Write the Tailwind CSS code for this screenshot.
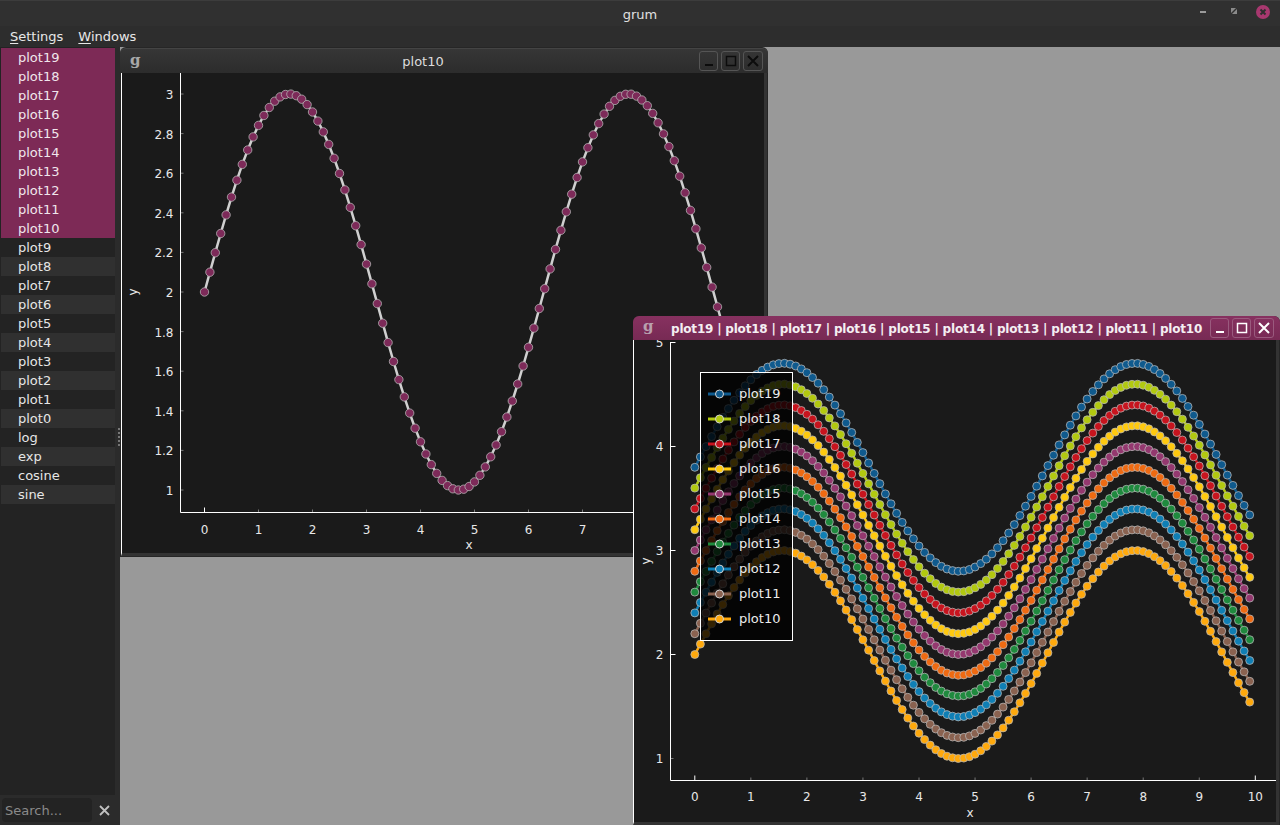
<!DOCTYPE html>
<html lang="en">
<head>
  <meta charset="UTF-8">
  <title>grum</title>
  <script src="https://cdn.jsdelivr.net/npm/@tailwindcss/browser@4"></script>
</head>
<body class="bg-[#2d2d2d] overflow-hidden">
<div class="w-[1280px] h-[825px] flex flex-col overflow-hidden text-[13px] text-[#e6e6e6] font-['DejaVu_Sans',sans-serif]">

  <!-- title bar -->
  <header class="h-[26px] shrink-0 flex items-center relative bg-[#303030] border-t border-[#3c3c3c]">
    <div class="flex-1 text-center text-[13px] text-[#e0e0e0] pt-[2px]">grum</div>
    <div class="absolute left-[1198px] top-[4px] flex items-center">
      <svg width="72" height="16" viewBox="0 0 72 16">
        <rect x="2" y="6" width="6" height="2" fill="#9a9a9a"/>
        <path d="M33 3h6v6h-6z" fill="#8a8a8a"/><path d="M33 9l6-6" stroke="#303030" stroke-width="1.5"/>
        <circle cx="65" cy="7" r="7" fill="#a8386f"/>
        <path d="M62.5 4.5l5 5M67.5 4.5l-5 5" stroke="#2f2f2f" stroke-width="2"/>
      </svg>
    </div>
  </header>

  <!-- menu -->
  <nav class="h-[21px] shrink-0 flex items-center gap-[15px] pl-[10px] bg-[#2d2d2d] text-[#e8e8e8]">
    <span><span class="underline underline-offset-2">S</span>ettings</span>
    <span><span class="underline underline-offset-2">W</span>indows</span>
  </nav>

  <div class="flex-1 flex min-h-0">
    <!-- plot list -->
    <aside class="w-[120px] shrink-0 flex flex-col bg-[#2b2b2b] relative">
      <ul id="list" class="h-[748px] w-[115px] bg-[#232323] pl-[1px] pt-[1px]"></ul>
      <div class="flex items-center pl-[2px] pt-[3px]">
        <input placeholder="Search..." class="w-[90px] h-[24px] px-[3px] rounded bg-[#232323] text-[13px] placeholder:text-[#8a8a8a] outline-none">
        <svg class="ml-[7px]" width="11" height="11" viewBox="0 0 11 11"><path d="M1 1l9 9M10 1l-9 9" stroke="#c0c0c0" stroke-width="1.8"/></svg>
      </div>
      <div class="absolute left-[118px] top-[381px] h-[18px] w-[2px] border-l-2 border-dotted border-[#777]"></div>
    </aside>

    <!-- mdi area -->
    <main class="flex-1 relative bg-[#999999] overflow-hidden">

      <section class="absolute left-0 top-0 w-[648px] h-[510px] flex flex-col rounded-t-md bg-[#262626]">
        <div class="h-[25px] mt-[1px] shrink-0 flex items-center relative rounded-t-md bg-gradient-to-b from-[#363636] to-[#2c2c2c] border-t border-[#444]">
          <span class="absolute left-[10px] top-[0px] text-[15px] font-bold text-[#a8a8a8] font-['DejaVu_Serif',serif]">g</span>
          <span class="flex-1 text-center text-[13px] text-[#dcdcdc] pr-[42px] pt-[1px]">plot10</span>
          <div class="absolute right-[5px] top-[2px] flex gap-[3px]">
            <span class="w-[19px] h-[20px] rounded-[3px] border border-[#555] flex items-center justify-center">
              <svg width="12" height="12" viewBox="0 0 12 12"><path d="M2 10h8" stroke="#0c0c0c" stroke-width="2"/></svg>
            </span>
            <span class="w-[19px] h-[20px] rounded-[3px] border border-[#555] flex items-center justify-center">
              <svg width="12" height="12" viewBox="0 0 12 12"><rect x="1.5" y="1.5" width="9" height="9" fill="none" stroke="#0c0c0c" stroke-width="1.5"/></svg>
            </span>
            <span class="w-[20px] h-[20px] rounded-[3px] border border-[#555] flex items-center justify-center">
              <svg width="12" height="12" viewBox="0 0 12 12"><path d="M1 1l10 10M11 1l-10 10" stroke="#0c0c0c" stroke-width="2"/></svg>
            </span>
          </div>
        </div>
        <div class="flex-1 min-h-0 ml-[1px] mr-[1px] mb-[1px] border-l border-white border-r-[3px] border-r-[#333] border-b-[3px] border-b-[#333] bg-[#1a1a1a]">
          <svg id="plotA" class="block" width="642" height="480" viewBox="122 73 642 480"></svg>
        </div>
      </section>

      <section class="absolute left-[513px] top-[269px] w-[647px] h-[509px] flex flex-col rounded-t-md bg-[#262626]">
        <div class="h-[24px] shrink-0 flex items-center relative rounded-t-md bg-gradient-to-b from-[#873160] to-[#772a54]">
          <span class="absolute left-[10px] top-[-1px] text-[15px] font-bold text-[#b9a0ae] font-['DejaVu_Serif',serif]">g</span>
          <span class="absolute left-[38px] top-[4px] text-[12px] tracking-[-0.2px] font-bold text-[#f4eef2] whitespace-nowrap">plot19 | plot18 | plot17 | plot16 | plot15 | plot14 | plot13 | plot12 | plot11 | plot10</span>
          <div class="absolute right-[6px] top-[2px] flex gap-[3px]">
            <span class="w-[19px] h-[20px] rounded-[3px] border border-[#9a5a7e] flex items-center justify-center">
              <svg width="12" height="12" viewBox="0 0 12 12"><path d="M2 10h8" stroke="#fff" stroke-width="2"/></svg>
            </span>
            <span class="w-[19px] h-[20px] rounded-[3px] border border-[#9a5a7e] flex items-center justify-center">
              <svg width="12" height="12" viewBox="0 0 12 12"><rect x="1.5" y="1.5" width="9" height="9" fill="none" stroke="#fff" stroke-width="1.5"/></svg>
            </span>
            <span class="w-[20px] h-[20px] rounded-[3px] border border-[#9a5a7e] flex items-center justify-center">
              <svg width="12" height="12" viewBox="0 0 12 12"><path d="M1 1l10 10M11 1l-10 10" stroke="#fff" stroke-width="2"/></svg>
            </span>
          </div>
        </div>
        <div class="flex-1 min-h-0 relative ml-[0px] mr-[1px] border-l border-white border-r-[3px] border-r-[#333] border-b-[3px] border-b-[#333] bg-[#1a1a1a]">
          <svg id="plotB" class="block" width="642" height="482" viewBox="634 340 642 482"></svg>
          <div id="legend" class="absolute left-[66px] top-[32px] w-[93px] h-[269px] border border-white bg-black/80 flex flex-col pt-[8px] text-[13px] text-[#ececec]"></div>
        </div>
      </section>
    </main>
  </div>
</div>

<script>
// list on the left
const names = [];
for (let i = 19; i >= 0; i--) names.push('plot' + i);
names.push('log', 'exp', 'cosine', 'sine');
const list = document.getElementById('list');
names.forEach((n, i) => {
  const li = document.createElement('li');
  li.innerText = n;
  const cls = i < 10 ? 'bg-[#7d2a56] text-[#f0e6ec]' : (i % 2 ? 'bg-[#303030]' : 'bg-[#232323]');
  li.className = 'h-[19px] leading-[19px] pl-[17px] ' + cls;
  list.appendChild(li);
});

// plots
const series = [
  ['plot19', '#0f5a8e'], ['plot18', '#b2c90f'], ['plot17', '#c8141e'], ['plot16', '#ffc90e'],
  ['plot15', '#94386f'], ['plot14', '#ef6a12'], ['plot13', '#1f8a3e'], ['plot12', '#0f7fb5'],
  ['plot11', '#8a6250'], ['plot10', '#ffa90c']
];

function axes(o) {
  let s = '';
  o.xt.forEach(v => {
    const x = o.x0 + v * o.sx, big = v === 0 || v === 10;
    s += `<line x1="${x}" x2="${x}" y1="${o.bottom}" y2="${o.bottom - (big ? 5 : 3)}" stroke="${big ? '#fff' : '#777'}"/>`;
    s += `<text x="${x}" y="${o.bottom + o.xDy}" text-anchor="middle" font-size="12" fill="#e8e8e8">${v}</text>`;
  });
  o.yt.forEach(v => {
    const y = o.y1 - (v - 1) * o.sy, big = o.bigY.includes(v);
    s += `<line x1="${o.left}" x2="${o.left + (big ? 5 : 3)}" y1="${y}" y2="${y}" stroke="${big ? '#fff' : '#777'}"/>`;
    s += `<text x="${o.left - 7}" y="${y + o.yDy}" text-anchor="end" font-size="12" fill="#e8e8e8">${v}</text>`;
  });
  s += `<path d="M${o.left} ${o.top}V${o.bottom}H${o.right}" fill="none" stroke="#fff" stroke-width="1"/>`;
  s += `<text x="${o.xl}" y="${o.xlY}" text-anchor="middle" font-size="12" fill="#e8e8e8">x</text>`;
  s += `<text transform="translate(${o.yl} ${o.ylY}) rotate(-90)" text-anchor="middle" font-size="12" fill="#e8e8e8">y</text>`;
  return s;
}

function curve(o, off, line, lw, fill, r) {
  const pts = [];
  for (let i = 0; i < 100; i++) {
    const v = i * 0.1;
    pts.push([o.x0 + v * o.sx, o.y1 - (off + Math.sin(v) - 1) * o.sy]);
  }
  let s = `<polyline points="${pts.map(p => p[0].toFixed(1) + ',' + p[1].toFixed(1)).join(' ')}" fill="none" stroke="${line}" stroke-width="${lw}"/>`;
  pts.forEach(p => {
    s += `<circle cx="${p[0].toFixed(1)}" cy="${p[1].toFixed(1)}" r="${r}" fill="${fill}" stroke="#b9b9b9" stroke-opacity="0.75" stroke-width="1"/>`;
  });
  return s;
}

const A = { x0: 204.5, sx: 54, y1: 490, sy: 198, left: 180.5, right: 770, top: 73, bottom: 512.5, xDy: 21, yDy: 5,
  xt: [0,1,2,3,4,5,6,7,8,9,10], yt: [1,1.2,1.4,1.6,1.8,2,2.2,2.4,2.6,2.8,3], bigY: [], xl: 469, xlY: 548.5, yl: 137, ylY: 292 };
document.getElementById('plotA').innerHTML = axes(A) + curve(A, 2, '#d0d0d0', 2.5, '#7d2a59', 4.2);

const B = { x0: 694.8, sx: 56.05, y1: 758.5, sy: 104, left: 670.5, right: 1276, top: 342, bottom: 780.5, xDy: 20, yDy: 4,
  xt: [0,1,2,3,4,5,6,7,8,9,10], yt: [1,2,3,4,5], bigY: [2,3,4,5], xl: 970, xlY: 816.5, yl: 649.5, ylY: 561 };
let b = axes(B);
series.slice().reverse().forEach((s, i) => { b += curve(B, 2 + i * 0.2, s[1], 2.5, s[1], 4); });
document.getElementById('plotB').innerHTML = b;

// legend
const legend = document.getElementById('legend');
series.forEach(s => {
  const row = document.createElement('div');
  row.className = 'h-[25px] flex items-center pl-[7px] gap-[8px]';
  row.innerHTML = `<svg width="23" height="12" viewBox="0 0 23 12"><line x1="0" x2="23" y1="6" y2="6" stroke="${s[1]}" stroke-width="3"/><circle cx="11.5" cy="6" r="4" fill="${s[1]}" stroke="#d0d0d0"/></svg><span>${s[0]}</span>`;
  legend.appendChild(row);
});
</script>
</body>
</html>
